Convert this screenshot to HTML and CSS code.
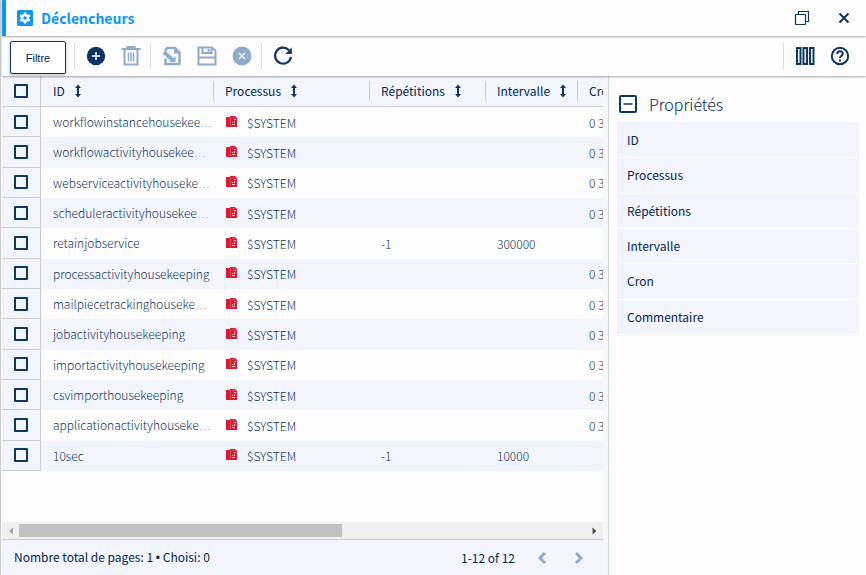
FILE: index.html
```html
<!DOCTYPE html>
<html lang="fr">
<head>
<meta charset="utf-8">
<title>Déclencheurs</title>
<link rel="stylesheet" href="styles.css">
</head>
<body>
<svg class="defs" aria-hidden="true">
  <symbol id="sort" viewBox="0 0 8 14"><path d="M4 .5 7 4H5v6h2L4 13.500 1 10h2V4H1z"/></symbol>
  <symbol id="proc" viewBox="0 0 12 12"><path d="M0 1h4V0h5l2 2v9H0z" fill="#e0182d"/><path d="M4.500 1v9" stroke="#fff" stroke-opacity=".2"/><path d="M7 1h1v1H7zM8 3h2v1H8zM6 6h1v1H6zM8 5h1v2H8zM6 8h3v1H6z" fill="#fff" fill-opacity=".8"/></symbol>
</svg>
<div class="window">
  <header class="titlebar">
    <svg class="app-icon" viewBox="0 0 16 16"><rect width="16" height="16" rx="1.500" fill="#0a96f8"/><path fill="#fff" d="M6.900 2.500h2.200l.4 1.700 1.100.6 1.700-.5 1.100 1.900-1.300 1.200v1.200l1.300 1.200-1.100 1.900-1.700-.5-1.100.6-.4 1.700H6.900l-.4-1.700-1.100-.6-1.700.5-1.100-1.900 1.300-1.200V7.400L2.600 6.200l1.100-1.900 1.700.5 1.100-.6z"/><circle cx="8" cy="8" r="1.800" fill="#0a96f8"/></svg>
    <h1>Déclencheurs</h1>
    <button class="win-btn" aria-label="Restaurer"><svg width="16" height="16" viewBox="0 0 16 16" fill="none" stroke="#0c3663" stroke-width="1.200"><rect x="1.500" y="4.500" width="10" height="10" rx=".5"/><path d="M4.500 4.500v-3h10v10h-3"/></svg></button>
    <button class="win-btn" aria-label="Fermer"><svg width="12" height="12" viewBox="0 0 12 12" stroke="#0c3663" stroke-width="2"><path d="m1.500 1.500 9 9m0-9-9 9"/></svg></button>
  </header>
  <div class="toolbar">
    <button class="filter">Filtre</button>
    <span class="sep"></span>
    <button class="tool" aria-label="Ajouter"><svg viewBox="0 0 20 20"><circle cx="10" cy="10" r="9.200" fill="#0c3663"/><path d="M10 6v8M6 10h8" stroke="#fff" stroke-width="1.500"/></svg></button>
    <button class="tool" aria-label="Supprimer" disabled><svg viewBox="0 0 20 20" fill="none" stroke="#8eacce" stroke-width="2"><path d="M.5 3h19M6.500 2.500V1h7v1.500M3.500 4v14.500h13V4"/><path d="M7.500 6.500v9m2.500-9v9m2.500-9v9" stroke-width="1.500"/></svg></button>
    <span class="sep"></span>
    <button class="tool" aria-label="Modifier" disabled><svg viewBox="0 0 20 20"><path d="M4 2h9l4.500 4.500v11.500H3.500v-5.500M4 2v3" fill="none" stroke="#8eacce" stroke-width="2.500"/><path d="m2 6 9 8.500" stroke="#8eacce" stroke-width="4"/><path d="M13.500 10v6H7.500z" fill="#8eacce"/><path d="M12 1.500v6h6z" fill="#8eacce"/></svg></button>
    <button class="tool" aria-label="Enregistrer" disabled><svg viewBox="0 0 20 20" fill="none" stroke="#8eacce" stroke-width="2"><path d="M1.500 1.500h13.500L18.500 5V18.500h-17z"/><path d="M5.500 2v5h9V2M1.500 11.500h17"/><path d="M11.500 3v3"/></svg></button>
    <button class="tool" aria-label="Annuler" disabled><svg viewBox="0 0 20 20"><circle cx="10" cy="10" r="9.500" fill="#8eacce"/><path d="m7 7 6 6m0-6-6 6" stroke="#fff" stroke-width="1.200"/></svg></button>
    <span class="sep"></span>
    <button class="tool" aria-label="Actualiser"><svg viewBox="0 0 20 20"><path d="M16 4.200A8 8 0 1 0 18 11" fill="none" stroke="#0c3663" stroke-width="2.200"/><path d="M18.800 1.500V8h-6.500z" fill="#0c3663"/></svg></button>
    <span class="sep push"></span>
    <button class="tool" aria-label="Colonnes"><svg viewBox="0 0 20 20" fill="none" stroke="#0c3663" stroke-width="2"><path d="M2 2h3.500v16H2zM8.500 2H12v16H8.500zM15 2h3.500v16H15z"/></svg></button>
    <button class="tool" aria-label="Aide"><svg viewBox="0 0 20 20" fill="none" stroke="#0c3663" stroke-width="2"><circle cx="10" cy="10" r="8.200"/><path d="M7.200 8c0-3.600 5.600-3.600 5.600-.2 0 2-2.800 2-2.800 4.200M10 13.500v2"/></svg></button>
  </div>
  <div class="content">
    <main class="grid-pane">
      <div class="grid-scroll">
        <table class="grid">
          <colgroup><col class="c-check"><col class="c-id"><col class="c-proc"><col class="c-rep"><col class="c-int"><col></colgroup>
          <thead><tr>
            <th class="check"><input type="checkbox" aria-label="Tout choisir"></th>
            <th><div class="head">ID<svg class="sort"><use href="#sort"/></svg></div></th>
            <th><div class="head line">Processus<svg class="sort"><use href="#sort"/></svg></div></th>
            <th><div class="head line">Répétitions<svg class="sort"><use href="#sort"/></svg></div></th>
            <th><div class="head line">Intervalle<svg class="sort"><use href="#sort"/></svg></div></th>
            <th><div class="head line">Cron</div></th>
          </tr></thead>
          <tbody>
            <tr><td class="check"><input type="checkbox" aria-label="Choisir"></td><td class="name"><span>workflowinstancehousekeeping</span></td><td><svg class="proc"><use href="#proc"/></svg>$SYSTEM</td><td></td><td></td><td>0 3</td></tr>
            <tr><td class="check"><input type="checkbox" aria-label="Choisir"></td><td class="name"><span>workflowactivityhousekeeping</span></td><td><svg class="proc"><use href="#proc"/></svg>$SYSTEM</td><td></td><td></td><td>0 3</td></tr>
            <tr><td class="check"><input type="checkbox" aria-label="Choisir"></td><td class="name"><span>webserviceactivityhousekeeping</span></td><td><svg class="proc"><use href="#proc"/></svg>$SYSTEM</td><td></td><td></td><td>0 3</td></tr>
            <tr><td class="check"><input type="checkbox" aria-label="Choisir"></td><td class="name"><span>scheduleractivityhousekeeping</span></td><td><svg class="proc"><use href="#proc"/></svg>$SYSTEM</td><td></td><td></td><td>0 3</td></tr>
            <tr><td class="check"><input type="checkbox" aria-label="Choisir"></td><td class="name"><span>retainjobservice</span></td><td><svg class="proc"><use href="#proc"/></svg>$SYSTEM</td><td>-1</td><td>300000</td><td></td></tr>
            <tr><td class="check"><input type="checkbox" aria-label="Choisir"></td><td class="name"><span>processactivityhousekeeping</span></td><td><svg class="proc"><use href="#proc"/></svg>$SYSTEM</td><td></td><td></td><td>0 3</td></tr>
            <tr><td class="check"><input type="checkbox" aria-label="Choisir"></td><td class="name"><span>mailpiecetrackinghousekeeping</span></td><td><svg class="proc"><use href="#proc"/></svg>$SYSTEM</td><td></td><td></td><td>0 3</td></tr>
            <tr><td class="check"><input type="checkbox" aria-label="Choisir"></td><td class="name"><span>jobactivityhousekeeping</span></td><td><svg class="proc"><use href="#proc"/></svg>$SYSTEM</td><td></td><td></td><td>0 3</td></tr>
            <tr><td class="check"><input type="checkbox" aria-label="Choisir"></td><td class="name"><span>importactivityhousekeeping</span></td><td><svg class="proc"><use href="#proc"/></svg>$SYSTEM</td><td></td><td></td><td>0 3</td></tr>
            <tr><td class="check"><input type="checkbox" aria-label="Choisir"></td><td class="name"><span>csvimporthousekeeping</span></td><td><svg class="proc"><use href="#proc"/></svg>$SYSTEM</td><td></td><td></td><td>0 3</td></tr>
            <tr><td class="check"><input type="checkbox" aria-label="Choisir"></td><td class="name"><span>applicationactivityhousekeeping</span></td><td><svg class="proc"><use href="#proc"/></svg>$SYSTEM</td><td></td><td></td><td>0 3</td></tr>
            <tr><td class="check"><input type="checkbox" aria-label="Choisir"></td><td class="name"><span>10sec</span></td><td><svg class="proc"><use href="#proc"/></svg>$SYSTEM</td><td>-1</td><td>10000</td><td></td></tr>
          </tbody>
        </table>
      </div>
      <div class="scrollbar">
        <svg class="arrow" viewBox="0 0 17 16"><path d="M11 4.500v7L7 8z" fill="#a3a3a3"/></svg>
        <div class="track"><div class="thumb"></div></div>
        <svg class="arrow" viewBox="0 0 17 16"><path d="M6.500 4.500v7l4-3.500z" fill="#505050"/></svg>
      </div>
      <footer class="status">
        <span>Nombre total de pages: 1 <span class="dot">•</span> Choisi: 0</span>
        <span class="range">1-12 of 12</span>
        <button class="page" aria-label="Page précédente" disabled><svg viewBox="0 0 10 12"><path d="M8 1 3 6l5 5"/></svg></button>
        <button class="page" aria-label="Page suivante" disabled><svg viewBox="0 0 10 12"><path d="m2 1 5 5-5 5"/></svg></button>
      </footer>
    </main>
    <aside class="props">
      <h2><button class="toggle" aria-label="Réduire"><svg width="18" height="18" viewBox="0 0 18 18" fill="none" stroke="#0c3663" stroke-width="2"><rect x="1" y="1" width="16" height="16" rx="1"/><path d="M4.500 9h9" stroke-width="1.500"/></svg></button>Propriétés</h2>
      <table class="prop-table">
        <tr><th>ID</th><td></td></tr>
        <tr><th>Processus</th><td></td></tr>
        <tr><th>Répétitions</th><td></td></tr>
        <tr><th>Intervalle</th><td></td></tr>
        <tr><th>Cron</th><td></td></tr>
        <tr><th>Commentaire</th><td></td></tr>
      </table>
    </aside>
  </div>
</div>
</body>
</html>
```
FILE: styles.css
```css
* { box-sizing: border-box; }

:root {
  --navy: #0c3663;
  --ink: #03264d;
  --pale: #f2f5fd;
  --line: #ccc;
  --muted: #8eacce;
  --text: "Noto Sans CJK SC", "Noto Sans", sans-serif;
}

body {
  margin: 0;
  background: #fdfdfd;
  color: var(--ink);
  font: 12px/16px var(--text);
}

button {
  padding: 0;
  border: 0;
  background: none;
  color: inherit;
}

svg { display: block; }

.defs {
  position: absolute;
  width: 0;
  height: 0;
}

.window {
  display: flex;
  flex-direction: column;
  height: 100vh;
  padding-left: 1px;
  border-left: 1px solid var(--line);
}

.titlebar {
  z-index: 2;
  display: flex;
  align-items: center;
  height: 36px;
  padding: 0 16px 0 11px;
  border-left: 4px solid #0a96f8;
  background: #fdfdfd;
  box-shadow: 0 1px 2px rgba(0, 0, 0, .35);
}

.app-icon {
  width: 16px;
  height: 16px;
}

h1 {
  flex: 1;
  margin: 0 0 0 8px;
  color: #0a96f8;
  font-size: 14px;
  font-weight: 700;
  line-height: 20px;
}

.win-btn { margin-left: 28px; }

.toolbar {
  z-index: 1;
  display: flex;
  align-items: center;
  height: 40px;
  padding: 0 9px 0 8px;
  background: #fdfdfd;
  box-shadow: 0 1px 2px rgba(0, 0, 0, .35);
}

.filter {
  align-self: flex-end;
  width: 56px;
  height: 33px;
  margin: 0 6px 2px 0;
  border: 1px solid var(--navy);
  border-radius: 2px;
  background: #fff;
  box-shadow: 0 1px 3px rgba(0, 0, 0, .3);
  font: 11px/16px "Liberation Sans", sans-serif;
}

.sep {
  width: 1px;
  height: 26px;
  margin: 0 3px 0 2px;
  background: #dcdcdc;
}

.push { margin-left: auto; }

.tool {
  display: flex;
  justify-content: center;
  width: 35px;
}

.tool svg {
  width: 20px;
  height: 20px;
}

.content {
  display: flex;
  flex: 1;
  min-height: 0;
}

.grid-pane {
  display: flex;
  flex: 1;
  flex-direction: column;
  min-width: 0;
}

.grid-scroll {
  flex: 1;
  overflow: hidden;
}

.grid {
  width: 1050px;
  height: 395px;
  border-collapse: separate;
  border-spacing: 0;
  table-layout: fixed;
}

.c-check { width: 39px; }
.c-id { width: 172px; }
.c-proc { width: 156px; }
.c-rep { width: 116px; }
.c-int { width: 92px; }

.grid th {
  height: 31px;
  padding: 0;
  border-bottom: 1px solid var(--line);
  background: var(--pale);
  font-weight: 400;
  text-align: left;
}

.head {
  display: flex;
  align-items: center;
  height: 20px;
  padding-left: 12px;
}

.line {
  padding-left: 11px;
  border-left: 1px solid var(--line);
}

.sort {
  width: 8px;
  height: 14px;
  margin-left: 9px;
  fill: var(--navy);
}

.grid td {
  overflow: hidden;
  padding: 1px 0 0 12px;
  color: var(--navy);
  font-weight: 300;
  text-overflow: ellipsis;
  white-space: nowrap;
}

.grid .name { font-family: "DejaVu Sans", sans-serif; }

.name span { font-family: var(--text); }

.grid tbody tr:nth-child(even) { background: var(--pale); }

.grid .check {
  padding: 0 0 0 12px;
  border-right: 1px solid var(--line);
  border-bottom: 1px solid var(--line);
  background: var(--pale);
}

.check input {
  display: block;
  width: 14px;
  height: 14px;
  margin: 0;
  border: 2px solid var(--navy);
  border-radius: 1px;
  appearance: none;
}

.proc {
  display: inline-block;
  width: 12px;
  height: 12px;
  margin: 0 9px 0 1px;
}

.scrollbar {
  display: flex;
  align-items: center;
  height: 17px;
  background: #f0f0f0;
}

.arrow {
  width: 17px;
  height: 16px;
}

.track { flex: 1; }

.thumb {
  width: 57%;
  height: 13px;
  background: #c1c1c1;
}

.status {
  display: flex;
  align-items: center;
  height: 36px;
  padding: 0 19px 0 12px;
  border-top: 1px solid var(--line);
  background: var(--pale);
}

.dot { font-family: "Liberation Sans", sans-serif; }

.range { margin-left: auto; }

.page { margin-left: 22px; }

.page + .page { margin-left: 27px; }

.page svg {
  width: 10px;
  height: 12px;
  fill: none;
  stroke: var(--muted);
  stroke-width: 3;
}

.props {
  width: 263px;
  padding: 17px 7px 0 9px;
  border-left: 5px solid #f7f8fb;
  box-shadow: inset 1px 0 #cfd6e2;
}

h2 {
  display: flex;
  align-items: center;
  gap: 12px;
  margin: 0 0 7px 2px;
  font-size: 16px;
  font-weight: 300;
  line-height: 22px;
}

.prop-table {
  width: 100%;
  height: 214px;
  border: 1px solid var(--pale);
  border-spacing: 0;
  background: var(--pale);
}

.prop-table th,
.prop-table td {
  padding: 0 9px;
  border-bottom: 1px solid #fff;
  font-weight: 400;
  text-align: left;
}

.prop-table th { width: 107px; }
```
